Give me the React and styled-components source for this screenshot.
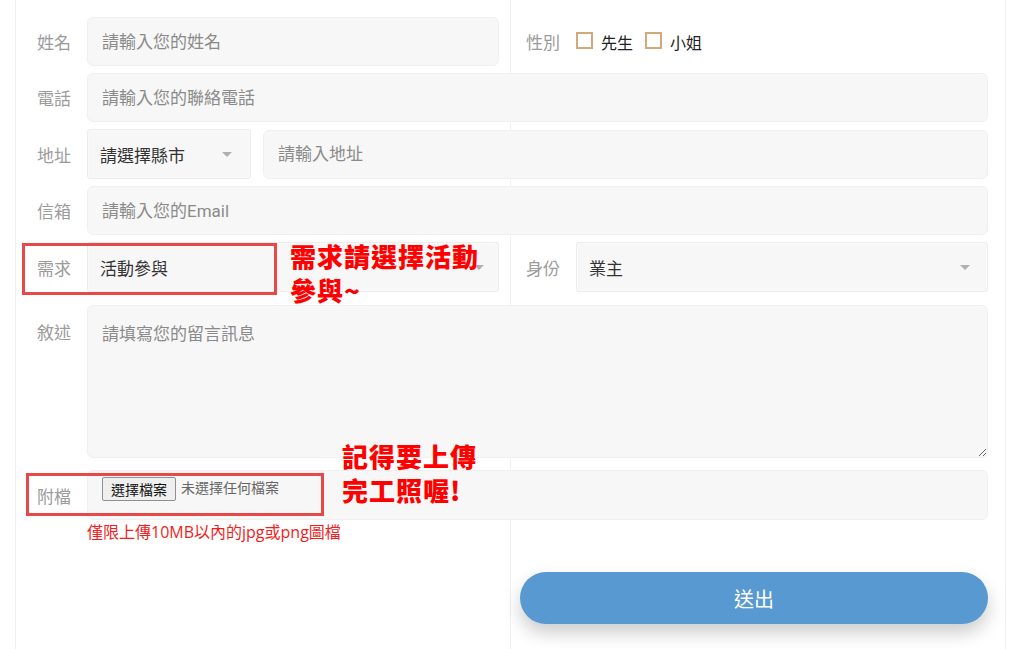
import React from "react";
import styled, { createGlobalStyle } from "styled-components";

const GlobalStyle = createGlobalStyle`
  body {
    margin: 0;
    background: #fff;
    font-family: Roboto, "Noto Sans CJK TC", sans-serif;
  }
  * { box-sizing: border-box; }
`;

const Page = styled.div`
  position: relative;
  height: 649px;
  overflow: hidden;
`;

const Card = styled.div`
  margin-left: 15px;
  width: 991px;
  min-height: 649px;
  border-left: 1px solid #f0f0f0;
  border-right: 1px solid #f0f0f0;
  background: linear-gradient(#f0f0f0, #f0f0f0) no-repeat 494px 0 / 1px 100%;
`;

const Form = styled.form`
  padding: 17px 17px 0 21px;
  display: flex;
  flex-direction: column;
`;

const Row = styled.div`
  display: grid;
  grid-template-columns: ${(p) => (p.$split ? "1fr 1fr" : "1fr")};
  column-gap: 27px;
  margin-top: ${(p) => p.$mt || 0}px;
`;

const Field = styled.div`
  display: flex;
  align-items: ${(p) => (p.$top ? "flex-start" : "center")};
  gap: ${(p) => p.$gap || 0}px;
`;

const Label = styled.span`
  width: 50px;
  flex-shrink: 0;
  font-size: 17px;
  color: #9b9b9b;
  padding-top: ${(p) => (p.$top ? "14px" : "0")};
  margin-right: ${(p) => p.$mr || 0}px;
`;

const Input = styled.input`
  flex: 1;
  min-width: 0;
  height: 49px;
  padding: 0 14px;
  font-family: inherit;
  font-size: 17px;
  color: #333;
  background: #f7f7f7;
  border: 1px solid #f0f0f0;
  border-radius: 6px;
  outline: none;
  &::placeholder { color: #8a8a8a; }
`;

const Area = styled.textarea`
  flex: 1;
  height: 153px;
  padding: 14px 14px;
  font-family: inherit;
  font-size: 17px;
  background: #f7f7f7;
  border: 1px solid #f0f0f0;
  border-radius: 6px;
  outline: none;
  resize: vertical;
  &::placeholder { color: #8a8a8a; }
`;

const Select = styled.div`
  flex: ${(p) => (p.$width ? "none" : "1")};
  width: ${(p) => (p.$width ? `${p.$width}px` : "auto")};
  height: 50px;
  display: flex;
  align-items: center;
  justify-content: space-between;
  padding: 0 14px 0 12px;
  font-size: 17px;
  color: #333;
  background: #f7f7f7;
  border: 1px solid #ececec;
  box-shadow: inset 0 0 0 1px #fafafa;
  border-radius: 3px;
`;

const Caret = styled.span`
  width: 0;
  height: 0;
  border-left: 5px solid transparent;
  border-right: 5px solid transparent;
  border-top: 5px solid #b0b0b0;
  margin-right: ${(p) => p.$mr || 0}px;
`;

const Choice = styled.label`
  display: flex;
  align-items: center;
  gap: 8px;
  margin-right: 12px;
  font-size: 16px;
  color: #222;
`;

const Box = styled.span`
  width: 17px;
  height: 17px;
  border: 2px solid #d2aa7a;
  margin-top: -2px;
`;

const FileBox = styled.div`
  flex: 1;
  height: 50px;
  padding: 6px 14px 0;
  display: flex;
  align-items: flex-start;
  gap: 5px;
  background: #f7f7f7;
  border: 1px solid #f0f0f0;
  border-radius: 6px;
`;

const FileButton = styled.span`
  height: 24px;
  padding: 0 8px;
  display: flex;
  align-items: center;
  font-size: 14px;
  color: #111;
  background: #efefef;
  border: 1px solid #8f8f8f;
  border-radius: 2px;
`;

const FileText = styled.span`
  font-size: 14px;
  line-height: 22px;
  color: #666;
`;

const Hint = styled.p`
  margin: 1px 0 0 50px;
  font-family: "Open Sans", "Noto Sans CJK TC", sans-serif;
  font-size: 16px;
  line-height: 22px;
  color: #f21d1d;
`;

const Submit = styled.button`
  margin: 29px 0 0 483px;
  width: 468px;
  height: 52px;
  border: none;
  border-radius: 26px;
  background: #5799d0;
  color: #fff;
  font-family: inherit;
  font-size: 20px;
  box-shadow: 0 9px 18px rgba(0, 0, 0, 0.2);
`;

const Mark = styled.div`
  position: absolute;
  left: ${(p) => p.$x}px;
  top: ${(p) => p.$y}px;
  width: ${(p) => p.$w}px;
  height: ${(p) => p.$h}px;
  border: 3px solid #e84848;
`;

const Note = styled.div`
  position: absolute;
  left: ${(p) => p.$x}px;
  top: ${(p) => p.$y}px;
  font-family: "Noto Sans CJK TC", sans-serif;
  font-weight: 900;
  font-size: 26px;
  line-height: 34px;
  color: #ff0000;
  letter-spacing: 1px;
  white-space: nowrap;
`;

export default function App() {
  return (
    <Page>
      <GlobalStyle />
      <Card>
        <Form onSubmit={(e) => e.preventDefault()}>
          <Row $split>
            <Field>
              <Label>姓名</Label>
              <Input placeholder="請輸入您的姓名" />
            </Field>
            <Field>
              <Label>性別</Label>
              <Choice>
                <Box />
                先生
              </Choice>
              <Choice>
                <Box />
                小姐
              </Choice>
            </Field>
          </Row>
          <Row $mt={7}>
            <Field>
              <Label>電話</Label>
              <Input placeholder="請輸入您的聯絡電話" />
            </Field>
          </Row>
          <Row $mt={7}>
            <Field $gap={12}>
              <Label $mr={-12}>地址</Label>
              <Select $width={164}>
                請選擇縣市
                <Caret $mr={4} />
              </Select>
              <Input placeholder="請輸入地址" />
            </Field>
          </Row>
          <Row $mt={7}>
            <Field>
              <Label>信箱</Label>
              <Input placeholder="請輸入您的Email" />
            </Field>
          </Row>
          <Row $split $mt={7}>
            <Field>
              <Label>需求</Label>
              <Select>
                活動參與
                <Caret />
              </Select>
            </Field>
            <Field>
              <Label>身份</Label>
              <Select>
                業主
                <Caret $mr={3} />
              </Select>
            </Field>
          </Row>
          <Row $mt={13}>
            <Field $top>
              <Label $top>敘述</Label>
              <Area placeholder="請填寫您的留言訊息" />
            </Field>
          </Row>
          <Row $mt={12}>
            <Field>
              <Label>附檔</Label>
              <FileBox>
                <FileButton>選擇檔案</FileButton>
                <FileText>未選擇任何檔案</FileText>
              </FileBox>
            </Field>
          </Row>
          <Hint>僅限上傳10MB以內的jpg或png圖檔</Hint>
          <Submit type="submit">送出</Submit>
        </Form>
      </Card>

      <Mark $x={22} $y={243} $w={255} $h={52} />
      <Note $x={290} $y={239}>
        需求請選擇活動
        <br />
        參與~
      </Note>
      <Mark $x={26} $y={473} $w={298} $h={43} />
      <Note $x={342} $y={439}>
        記得要上傳
        <br />
        完工照喔!
      </Note>
    </Page>
  );
}
